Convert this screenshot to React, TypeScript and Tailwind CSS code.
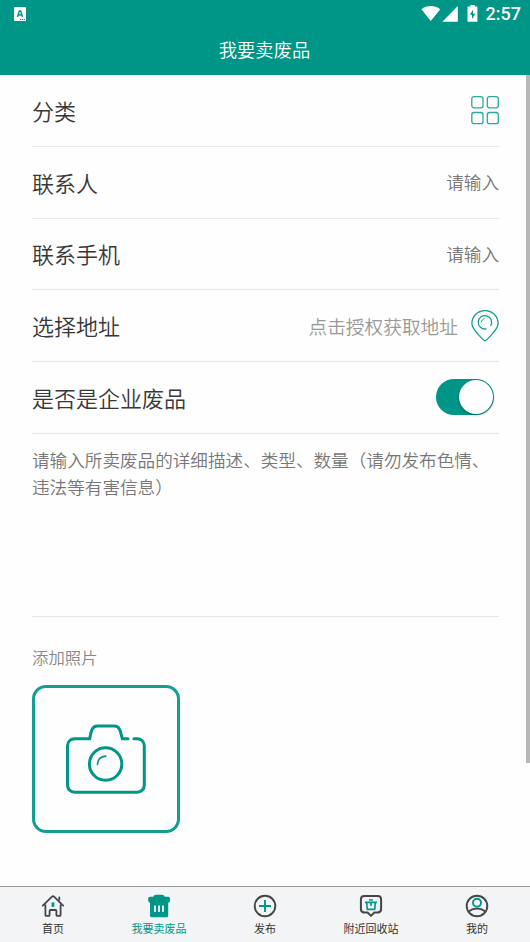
import React from 'react';

const fields = [
  { label: '联系人', placeholder: '请输入' },
  { label: '联系手机', placeholder: '请输入' },
];

const StatusBar: React.FC = () => (
  <div className="flex h-[27px] items-center justify-between pl-[14px] pr-[9px]">
    <svg width="12" height="14" viewBox="0 0 12 14">
      <rect width="12" height="14" rx="0.8" fill="#fff" />
      <path d="M3.4 10 5.4 4h1.2l2 6M4.2 8h3.6" stroke="#009687" strokeWidth="1.4" fill="none" />
      <path d="M6 12.5h5" stroke="#009687" strokeWidth="1" strokeDasharray="1.2 0.7" />
    </svg>
    <div className="flex items-center">
      <svg width="58" height="18" viewBox="0 0 58 18" fill="#fff">
        <path d="M1.4 4.2C6.8-.1 14.8-.1 20.2 4.2L10.8 16Z" />
        <path d="M37.8 1v15.7H22.4Z" />
        <path d="M50.4 0h4.4v1.6h2.6v15.1h-9.9V1.6h2.9Z" />
        <path d="M53.2 4.5 49.8 9.8h2.2v4.2l3.3-5.3h-2.2Z" fill="#009687" />
      </svg>
      <span className="ml-[8px] font-[Roboto,sans-serif] text-[18px] leading-[27px] font-medium">2:57</span>
    </div>
  </div>
);

const GridIcon = () => (
  <svg width="28" height="30" viewBox="0 0 28 30" fill="none" stroke="#2aa99c" strokeWidth="1.3">
    <rect x="0.8" y="1.6" width="11.2" height="11.2" rx="2.2" />
    <rect x="16.3" y="1.6" width="11" height="11.2" rx="2.2" />
    <rect x="0.8" y="17.5" width="11.2" height="11.2" rx="2.2" />
    <rect x="16.3" y="17.5" width="11" height="11.2" rx="2.2" />
  </svg>
);

const PinIcon = () => (
  <svg width="28" height="32" viewBox="0 0 28 32" fill="none" stroke="#129d8f" strokeWidth="1.3" strokeLinecap="round">
    <path d="M14 30.8C12.8 30.8 11.5 29.1 9 26.4 4.8 21.8.9 18.2.9 13.5a13.1 13 0 0 1 26.2 0c0 4.7-3.9 8.3-8.1 12.9-2.5 2.7-3.8 4.4-5 4.4Z" />
    <path d="M15 18.9A6.7 6.7 0 1 1 19.8 15.5" />
    <path d="M10.3 12c.3-1.7 1.4-2.8 3-3.2" strokeWidth="1" />
  </svg>
);

const CameraIcon = () => (
  <svg width="80" height="70" viewBox="0 0 80 70" fill="none" stroke="#009687" strokeWidth="3" strokeLinecap="round">
    <path d="M62 14.7h-5.7C54.7 8.8 54.2 2 48.5 2H31.2c-5.8 0-6.4 7-7.5 12.7H8.5a7 7 0 0 0-7 7v39.5a7 7 0 0 0 7 7h62.8a7 7 0 0 0 7-7V21.7a7 7 0 0 0-7-7h-3.4" />
    <circle cx="39.6" cy="40" r="16.2" />
    <path d="M31.5 40.5c.1-4.8 3.1-8 8.2-8.4" strokeWidth="1.6" />
  </svg>
);

const HomeIcon = () => (
  <svg width="24" height="24" viewBox="0 0 24 24" fill="none" stroke="#444648" strokeWidth="1.8" strokeLinecap="round" strokeLinejoin="round">
    <path d="m1.8 11.7 9.2-9q1-.9 2 0l9.2 9M18.3 5.5V3.4M4.4 11.2v9.7q0 1 1 1h2.2q1 0 1-1V17q0-1 1-1h4.8q1 0 1 1v3.9q0 1 1 1h2.2q1 0 1-1v-9.7" />
    <path d="M12 8.4v4.4" stroke="#009687" strokeWidth="2.8" strokeLinecap="butt" />
  </svg>
);

const TrashIcon = () => (
  <svg width="24" height="24" viewBox="0 0 24 24" fill="#009687">
    <path d="M6.2 2.8Q7 .8 9 .8h6q2 0 2.8 2h3.4q1.8 0 1.8 1.8v2q0 1.8-1.8 2.2v12.6q0 1.9-1.9 1.9H4.9Q3 23.3 3 21.4V8.8Q1.2 8.4 1.2 6.6v-2Q1.2 2.8 3 2.8Z" />
    <path d="M8 12.2v5M12 12.2v5M16 12.2v5" stroke="#f2f4f6" strokeWidth="1.8" strokeLinecap="round" />
  </svg>
);

const PlusIcon = () => (
  <svg width="24" height="24" viewBox="0 0 24 24" fill="none" stroke="#444648" strokeWidth="1.9">
    <circle cx="12" cy="12" r="10.3" />
    <path d="M12 6v12M6 12h12" stroke="#009687" />
  </svg>
);

const StationIcon = () => (
  <svg width="24" height="24" viewBox="0 0 24 24" fill="none" stroke="#444648" strokeWidth="2" strokeLinejoin="round">
    <path d="M5.3 2h13.4q3.4 0 3.4 3.4v9.7q0 3.4-3.4 3.4h-3.3L12 21.9l-3.4-3.4H5.3q-3.4 0-3.4-3.4V5.4Q1.9 2 5.3 2Z" />
    <path d="M6 8.4h12M10 6h4M7.7 9l.6 6.4h7.4l.6-6.4M12 8.4v3.6" stroke="#009687" strokeWidth="1.6" />
  </svg>
);

const UserIcon = () => (
  <svg width="24" height="24" viewBox="0 0 24 24" fill="none" stroke="#444648" strokeWidth="1.9">
    <circle cx="12" cy="12" r="10.3" />
    <path d="M3.5 17.8c4.5-4.3 12.5-4.3 17 0" />
    <circle cx="12" cy="8.8" r="4" stroke="#009687" />
  </svg>
);

const tabs = [
  { label: '首页', icon: HomeIcon },
  { label: '我要卖废品', icon: TrashIcon, active: true },
  { label: '发布', icon: PlusIcon },
  { label: '附近回收站', icon: StationIcon },
  { label: '我的', icon: UserIcon },
];

const Row: React.FC<{ label: string; children: React.ReactNode }> = ({ label, children }) => (
  <div className="flex h-[71.75px] items-center justify-between border-b border-[#e4e6e8]">
    <span className="pb-px text-[22px] leading-8 text-[#383838]">{label}</span>
    {children}
  </div>
);

export default function App() {
  return (
    <div className="relative flex h-[942px] w-[530px] flex-col overflow-hidden bg-[#fefefe] font-['Noto_Sans_CJK_SC',sans-serif] font-[350]">
      <header className="h-[75px] shrink-0 bg-[#009687] text-white">
        <StatusBar />
        <h1 className="pt-[8px] pr-px text-center text-[18.3px] leading-[28px] font-[350]">我要卖废品</h1>
      </header>

      <main className="flex-1 pl-8 pr-[31px]">
        <Row label="分类">
          <GridIcon />
        </Row>
        {fields.map((field) => (
          <Row key={field.label} label={field.label}>
            <span className="text-[17.6px] text-[#777]">{field.placeholder}</span>
          </Row>
        ))}
        <Row label="选择地址">
          <div className="flex items-center gap-[13px]">
            <span className="text-[18.7px] text-[#999]">点击授权获取地址</span>
            <PinIcon />
          </div>
        </Row>
        <Row label="是否是企业废品">
          <div className="mr-[5px] flex h-9 w-[58px] justify-end rounded-full bg-[#009687] p-px">
            <div className="size-[34px] rounded-full bg-white shadow-[0_1px_3px_rgba(0,0,0,0.35)]" />
          </div>
        </Row>

        <div className="h-[183px] border-b border-[#e4e6e8] pt-[13.5px] text-[17.6px] leading-[26.4px] text-[#777]">
          <p className="whitespace-nowrap">请输入所卖废品的详细描述、类型、数量（请勿发布色情、</p>
          <p>违法等有害信息）</p>
        </div>

        <h2 className="pt-[27px] text-[16.4px] leading-[26px] text-[#888]">添加照片</h2>
        <div className="mt-[15px] flex size-[148px] items-center justify-center rounded-[14px] border-[3px] border-[#149e90]">
          <CameraIcon />
        </div>
      </main>

      <nav className="grid h-14 shrink-0 grid-cols-5 border-t border-[#999] bg-[#f2f4f6]">
        {tabs.map(({ label, icon: Icon, active }) => (
          <div key={label} className="flex flex-col items-center pt-[7px]">
            <Icon />
            <span className={`text-[11px] leading-[20px] font-normal ${active ? 'text-[#009687]' : 'text-[#333]'}`}>{label}</span>
          </div>
        ))}
      </nav>

      <div className="absolute top-[75px] right-0 h-[688px] w-1 bg-[#b8b8b8]" />
    </div>
  );
}
